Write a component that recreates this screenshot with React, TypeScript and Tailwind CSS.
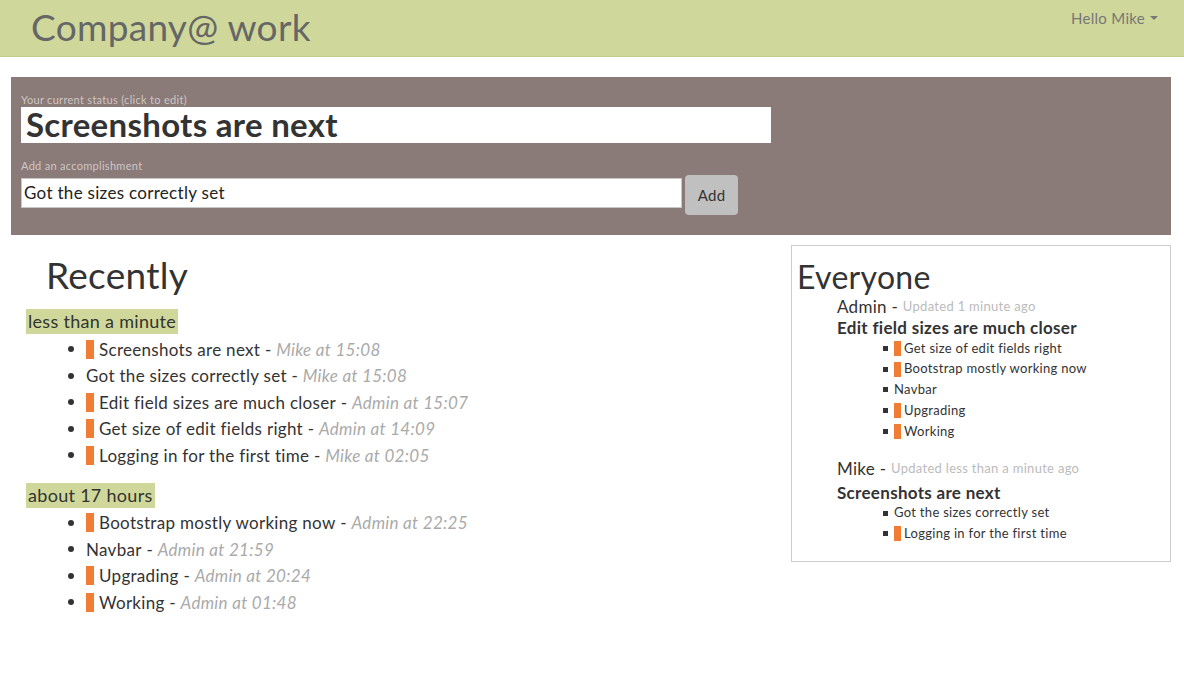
import React from 'react';

type Item = { text: string; flag: boolean; who?: string; at?: string };

const groups: { label: string; items: Item[] }[] = [
  {
    label: 'less than a minute',
    items: [
      { text: 'Screenshots are next', flag: true, who: 'Mike', at: '15:08' },
      { text: 'Got the sizes correctly set', flag: false, who: 'Mike', at: '15:08' },
      { text: 'Edit field sizes are much closer', flag: true, who: 'Admin', at: '15:07' },
      { text: 'Get size of edit fields right', flag: true, who: 'Admin', at: '14:09' },
      { text: 'Logging in for the first time', flag: true, who: 'Mike', at: '02:05' },
    ],
  },
  {
    label: 'about 17 hours',
    items: [
      { text: 'Bootstrap mostly working now', flag: true, who: 'Admin', at: '22:25' },
      { text: 'Navbar', flag: false, who: 'Admin', at: '21:59' },
      { text: 'Upgrading', flag: true, who: 'Admin', at: '20:24' },
      { text: 'Working', flag: true, who: 'Admin', at: '01:48' },
    ],
  },
];

const people = [
  {
    name: 'Admin',
    updated: 'Updated 1 minute ago',
    status: 'Edit field sizes are much closer',
    items: [
      { text: 'Get size of edit fields right', flag: true },
      { text: 'Bootstrap mostly working now', flag: true },
      { text: 'Navbar', flag: false },
      { text: 'Upgrading', flag: true },
      { text: 'Working', flag: true },
    ],
  },
  {
    name: 'Mike',
    updated: 'Updated less than a minute ago',
    status: 'Screenshots are next',
    items: [
      { text: 'Got the sizes correctly set', flag: false },
      { text: 'Logging in for the first time', flag: true },
    ],
  },
];

export default function App() {
  return (
    <div className="min-h-[696px] bg-white text-[#333] font-['Lato',sans-serif] tracking-[0.3px]">
      {/* navbar */}
      <nav className="h-[57px] bg-[#cfd89a] border-b border-[#c2ca8c] flex justify-between">
        <div className="pl-[31px] text-[37px] leading-[53px] text-[#666]">Company@ work</div>
        <div className="pr-[26px] pt-[7px] text-[15px] text-[#777] flex items-start gap-[5px]">
          <span>Hello Mike</span>
          <span className="mt-[9px] w-0 h-0 border-l-[4px] border-r-[4px] border-t-[4px] border-l-transparent border-r-transparent border-t-[#777]" />
        </div>
      </nav>

      <div className="pl-[11px] pr-[13px] pt-[20px]">
        {/* status panel */}
        <div className="bg-[#8a7a78] pl-[10px] pt-[15px] pb-[20px]">
          <div className="text-[11px] leading-[15px] text-[#cfc6c4]">Your current status (click to edit)</div>
          <div className="w-[750px] h-[36px] bg-white flex items-center pl-[5px] text-[33px] font-bold text-[#333]">
            Screenshots are next
          </div>
          <div className="mt-[15px] text-[11px] leading-[15px] text-[#cfc6c4]">Add an accomplishment</div>
          <div className="flex items-start gap-[3px] mt-[2px]">
            <div className="mt-[3px] w-[661px] h-[30px] bg-white border border-[#c8c8c8] flex items-center pl-[2px] text-[17px] text-[#222]">
              Got the sizes correctly set
            </div>
            <button className="w-[53px] h-[40px] bg-[#c0c0c0] rounded-[4px] text-[15px] text-[#333]">Add</button>
          </div>
        </div>

        <div className="flex gap-[11px]">
          {/* recently */}
          <div className="flex-1 pt-[18px]">
            <h1 className="pl-[35px] text-[37px] leading-[44px] text-[#333]">Recently</h1>
            <div className="mt-[12px]">
              {groups.map((g, gi) => (
                <div key={gi} className={gi > 0 ? 'mt-[14px]' : ''}>
                  <div className="pl-[15px]">
                    <span className="inline-block bg-[#cfd89a] px-[2px] text-[18px] leading-[25px] text-[#333]">{g.label}</span>
                  </div>
                  <ul className="mt-[2px]">
                    {g.items.map((it, ii) => (
                      <li key={ii} className="flex items-center h-[26.5px] text-[17px]">
                        <span className="ml-[57px] w-[6px] h-[6px] rounded-full bg-[#333]" />
                        <span className="ml-[12px] flex items-center">
                          {it.flag && <span className="w-[8px] h-[19px] bg-[#f07d33] mr-[5px]" />}
                          <span>{it.text}</span>
                          <span className="whitespace-pre"> - </span>
                          <span className="italic text-[#aaa]">{it.who} at {it.at}</span>
                        </span>
                      </li>
                    ))}
                  </ul>
                </div>
              ))}
            </div>
          </div>

          {/* everyone */}
          <div className="w-[380px] mt-[10px] self-start border border-[#ccc] pl-[5px] pt-[16px] pb-[17px]">
            <h2 className="text-[32px] leading-[30px] text-[#333]">Everyone</h2>
            <div className="pl-[40px]">
              {people.map((p, pi) => (
                <div key={pi} className={pi > 0 ? 'mt-[18px]' : 'mt-[6px]'}>
                  <div className="h-[18px] flex items-center text-[17px]">
                    <span>{p.name}</span>
                    <span className="whitespace-pre"> - </span>
                    <span className="text-[13px] text-[#bbb]">{p.updated}</span>
                  </div>
                  <div className={`${pi > 0 ? 'mt-[5px]' : 'mt-[2px]'} h-[20px] flex items-center text-[17px] font-bold`}>{p.status}</div>
                  <ul>
                    {p.items.map((it, ii) => (
                      <li key={ii} className="flex items-center h-[20.75px] text-[13px]">
                        <span className="ml-[46px] w-[5px] h-[5px] bg-[#333]" />
                        <span className="ml-[6px] flex items-center">
                          {it.flag && <span className="w-[7px] h-[15px] bg-[#f07d33] mr-[3px]" />}
                          <span>{it.text}</span>
                        </span>
                      </li>
                    ))}
                  </ul>
                </div>
              ))}
            </div>
          </div>
        </div>
      </div>
    </div>
  );
}
